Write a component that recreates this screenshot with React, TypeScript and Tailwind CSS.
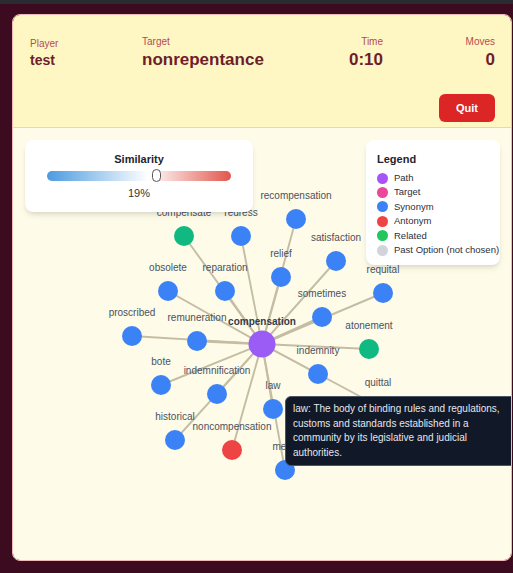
import React from "react";

interface GraphNode {
  word: string;
  x: number;
  y: number;
  kind: "synonym" | "related" | "antonym";
}

const CENTER = { x: 262, y: 345 };

const nodes: GraphNode[] = [
  { word: "compensate", x: 184, y: 237, kind: "related" },
  { word: "redress", x: 241, y: 237, kind: "synonym" },
  { word: "recompensation", x: 296, y: 220, kind: "synonym" },
  { word: "relief", x: 281, y: 278, kind: "synonym" },
  { word: "satisfaction", x: 336, y: 262, kind: "synonym" },
  { word: "obsolete", x: 168, y: 292, kind: "synonym" },
  { word: "reparation", x: 225, y: 292, kind: "synonym" },
  { word: "requital", x: 383, y: 294, kind: "synonym" },
  { word: "sometimes", x: 322, y: 318, kind: "synonym" },
  { word: "proscribed", x: 132, y: 337, kind: "synonym" },
  { word: "remuneration", x: 197, y: 342, kind: "synonym" },
  { word: "atonement", x: 369, y: 350, kind: "related" },
  { word: "indemnity", x: 318, y: 375, kind: "synonym" },
  { word: "bote", x: 161, y: 386, kind: "synonym" },
  { word: "indemnification", x: 217, y: 395, kind: "synonym" },
  { word: "quittal", x: 378, y: 407, kind: "synonym" },
  { word: "law", x: 273, y: 410, kind: "synonym" },
  { word: "historical", x: 175, y: 441, kind: "synonym" },
  { word: "noncompensation", x: 232, y: 451, kind: "antonym" },
  { word: "meed", x: 285, y: 471, kind: "synonym" },
];

const fill = {
  synonym: "#3b82f6",
  related: "#10b981",
  antonym: "#ef4444",
};

const legend = [
  { label: "Path", color: "bg-[#a855f7]" },
  { label: "Target", color: "bg-[#ec4899]" },
  { label: "Synonym", color: "bg-[#3b82f6]" },
  { label: "Antonym", color: "bg-[#ef4444]" },
  { label: "Related", color: "bg-[#22c55e]" },
  { label: "Past Option (not chosen)", color: "bg-[#d1d5db]" },
];

function Stat({ label, value, big, right }: { label: string; value: string; big?: boolean; right?: boolean }) {
  return (
    <div className={right ? "flex flex-col items-end" : "flex flex-col"}>
      <span className="text-[10px] leading-[14px] text-[#b84a50]">{label}</span>
      <span
        className={
          big
            ? "text-[17px] leading-[22px] font-bold text-[#6f1d2b]"
            : "text-[14px] leading-[19px] font-bold text-[#6f1d2b] mb-[1px]"
        }
      >
        {value}
      </span>
    </div>
  );
}

export default function App() {
  return (
    <div className="min-h-[573px] bg-[#3d0b1f] font-['Liberation_Sans',Arial,sans-serif]">
      <div className="h-[4px] bg-[#2a2b30]" />

      <div className="ml-[12px] mt-[10px] w-[500px] h-[547px] rounded-lg border border-[#f3b9b9] overflow-hidden flex flex-col">
        {/* ===== HEADER ===== */}
        <div className="bg-[#fef7c3] border-b border-[#f8cbc5] h-[115px] pl-[17px] pr-[16px] pt-[20px]">
          <div className="flex items-end">
            <div className="w-[112px]">
              <Stat label="Player" value="test" />
            </div>
            <div className="flex-1">
              <Stat label="Target" value="nonrepentance" big />
            </div>
            <Stat label="Time" value="0:10" big right />
            <div className="w-[112px]">
              <Stat label="Moves" value="0" big right />
            </div>
          </div>
          <div className="flex justify-end mt-[23px]">
            <button className="w-[56px] h-[28px] rounded-md bg-[#dc2626] text-white text-[11px] font-bold">
              Quit
            </button>
          </div>
        </div>

        {/* ===== GRAPH ===== */}
        <div className="relative flex-1 bg-[#fefbe8]">
          <svg width="498" height="432" viewBox="13 129 498 432" className="block">
            {nodes.map((n) => (
              <line
                key={`e-${n.word}`}
                x1={CENTER.x}
                y1={CENTER.y}
                x2={n.x}
                y2={n.y}
                stroke="#c4bda4"
                strokeWidth={n.word === "sometimes" || n.word === "remuneration" ? 2.6 : 1.9}
              />
            ))}
            {nodes.map((n) => (
              <g key={n.word}>
                <circle cx={n.x} cy={n.y} r={10} fill={fill[n.kind]} />
                <text
                  x={n.x}
                  y={n.y - 20}
                  textAnchor="middle"
                  fontSize="10"
                  fill="#4b5160"
                  fontFamily="Liberation Sans, Arial, sans-serif"
                >
                  {n.word}
                </text>
              </g>
            ))}
            <circle cx={CENTER.x} cy={CENTER.y} r={13.5} fill="#9a5cf5" />
            <text
              x={CENTER.x}
              y={CENTER.y - 19}
              textAnchor="middle"
              fontSize="10"
              fontWeight="bold"
              fill="#333a48"
              fontFamily="Liberation Sans, Arial, sans-serif"
            >
              compensation
            </text>
          </svg>

          {/* ===== SIMILARITY ===== */}
          <div className="absolute left-[12px] top-[12px] w-[228px] h-[72px] bg-white rounded-lg shadow-md px-[22px] pt-[12px] flex flex-col items-center">
            <span className="text-[11px] leading-[14px] font-bold text-[#1f2430]">Similarity</span>
            <div className="relative w-[184px] h-[10px] mt-[5px] rounded-full bg-[linear-gradient(to_right,#4b9be0,#ffffff_55%,#e2564c)]">
              <div className="absolute left-[105px] top-[-2px] w-[9px] h-[13px] rounded-full bg-white border border-[#555]" />
            </div>
            <span className="text-[11px] leading-[14px] text-[#333] mt-[5px]">19%</span>
          </div>

          {/* ===== LEGEND ===== */}
          <div className="absolute left-[353px] top-[12px] w-[134px] h-[125px] bg-white rounded-lg shadow-md pl-[11px] pt-[12px]">
            <div className="text-[11px] leading-[14px] font-bold text-[#1f2430] mb-[5px]">Legend</div>
            <div className="flex flex-col">
              {legend.map((item) => (
                <div key={item.label} className="flex items-center h-[14.4px]">
                  <span className={`shrink-0 w-[11px] h-[11px] rounded-full ${item.color}`} />
                  <span className="ml-[6px] text-[9.5px] text-[#2b303b] whitespace-nowrap">{item.label}</span>
                </div>
              ))}
            </div>
          </div>

          {/* ===== TOOLTIP ===== */}
          <div className="absolute left-[272px] top-[268px] w-[240px] bg-[#111827] border border-[#4b5563] rounded-md px-[7px] pt-[5px] pb-[5px] text-[10px] leading-[14.5px] text-[#e5e7eb]">
            <div className="w-[222px]">
              law: The body of binding rules and regulations, customs and standards established in a community by
              its legislative and judicial authorities.
            </div>
          </div>
        </div>
      </div>
    </div>
  );
}
